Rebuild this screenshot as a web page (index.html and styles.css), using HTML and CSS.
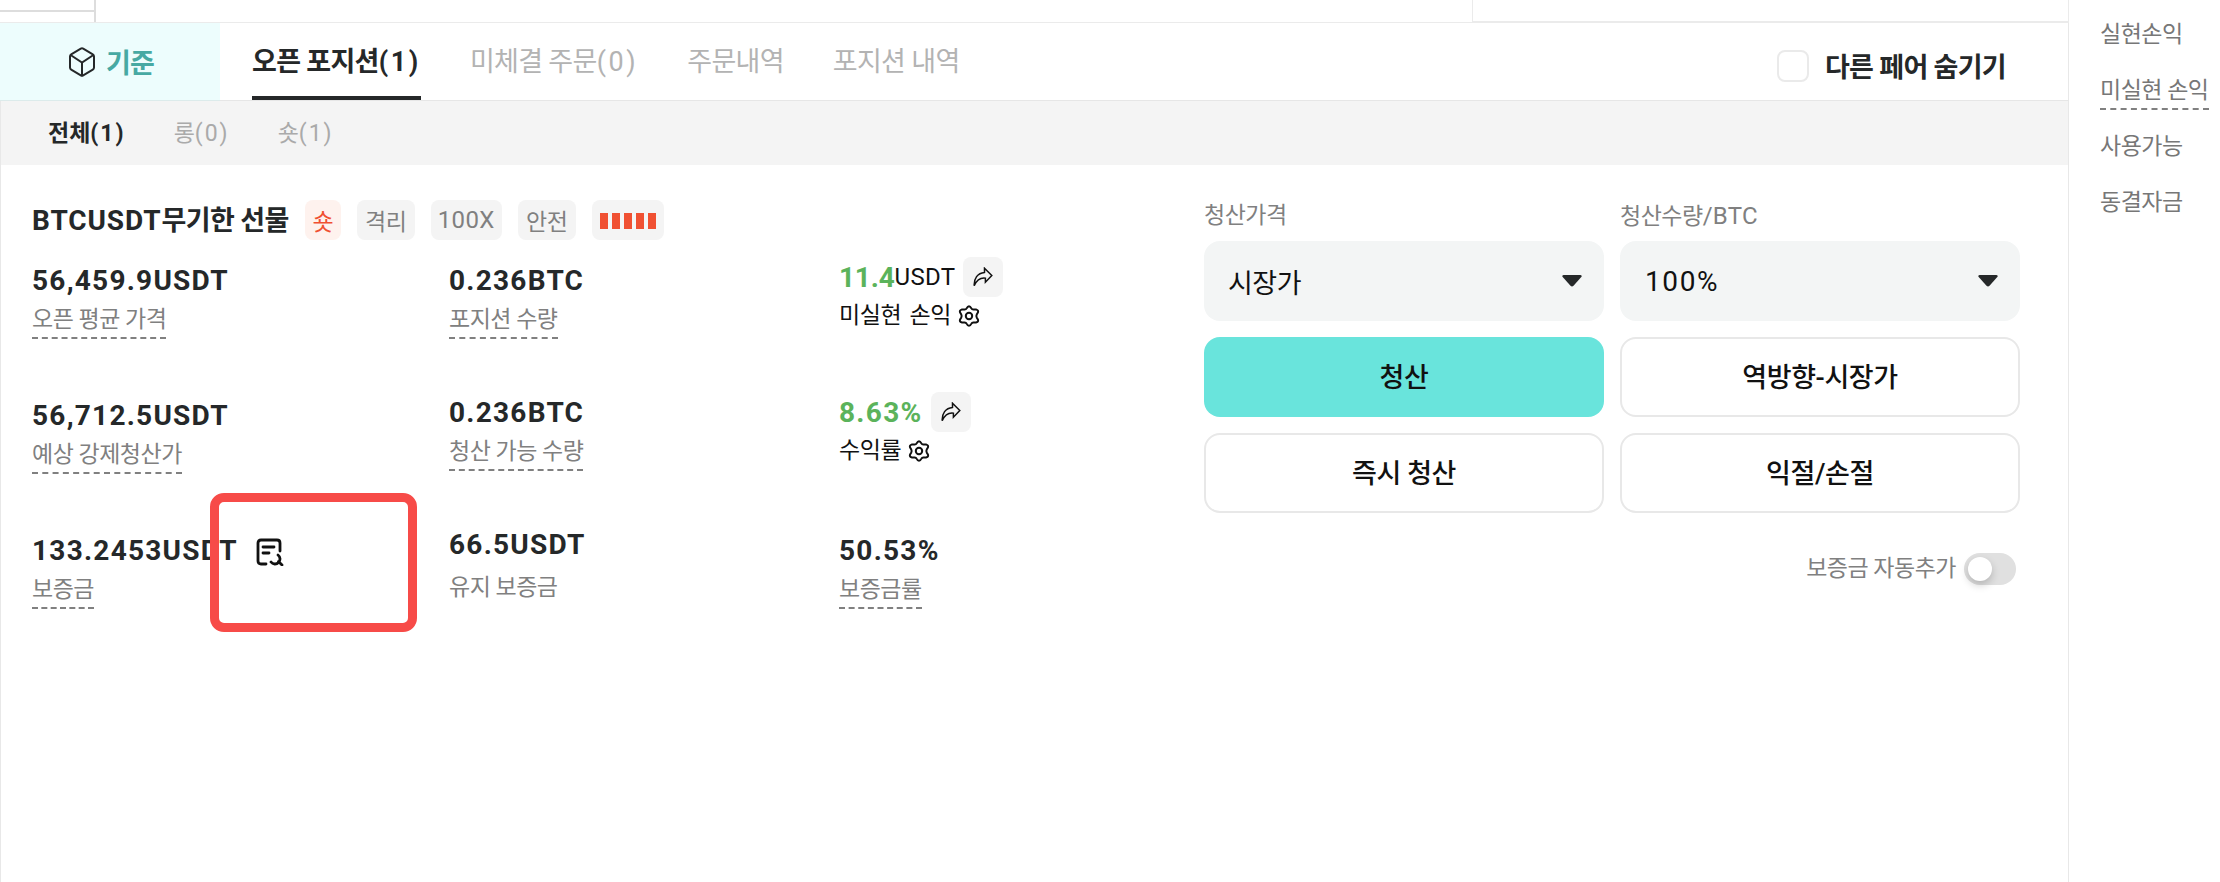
FILE: index.html
```
<!DOCTYPE html>
<html lang="ko">
<head>
    <meta charset="UTF-8">
    <meta name="viewport" content="width=device-width, initial-scale=1.0">
    <title>오픈 포지션</title>
    <link rel="stylesheet" href="styles.css">
</head>
<body>

    <svg class="symbols">
        <symbol id="share" viewBox="0 0 20 20">
            <path d="M11.5 1.2 L18.8 8.4 L12.4 15.2 V11.2 C7.5 10.6 4 12.5 1.2 18.8 C.8 11.5 4.5 6 11.5 5.4 Z"/>
        </symbol>
        <symbol id="gear" viewBox="0 0 22 22">
            <path d="M11 1.2 Q12.3 1.2 13.4 3.4 Q14 4.7 15.6 4.6 L18.4 4.6 Q20.8 5.4 19.9 7.6 L18.7 9.6 Q18 11 18.7 12.4 L19.9 14.4 Q20.8 16.6 18.4 17.4 L15.6 17.4 Q14 17.3 13.4 18.6 Q12.3 20.8 11 20.8 Q9.7 20.8 8.6 18.6 Q8 17.3 6.4 17.4 L3.6 17.4 Q1.2 16.6 2.1 14.4 L3.3 12.4 Q4 11 3.3 9.6 L2.1 7.6 Q1.2 5.4 3.6 4.6 L6.4 4.6 Q8 4.7 8.6 3.4 Q9.7 1.2 11 1.2 Z"/>
            <circle cx="11" cy="11" r="3.2"/>
        </symbol>
    </svg>

    <div class="page">
        <main class="main">
            <div class="top-strip">
                <div class="strip-left"></div>
                <div class="strip-right"></div>
            </div>

            <header class="tabs">
                <div class="base-tab">
                    <svg class="cube" viewBox="0 0 26 30">
                        <path d="M11.8 1.7 Q13 1 14.2 1.7 L23.8 7.3 Q25 8 25 9.4 V20.6 Q25 22 23.8 22.7 L14.2 28.3 Q13 29 11.8 28.3 L2.2 22.7 Q1 22 1 20.6 V9.4 Q1 8 2.2 7.3 Z M1.6 8 L13 15.5 L24.4 8 M13 15.5 V28.6"/>
                    </svg>
                    <span>기준</span>
                </div>
                <nav class="tab-list">
                    <a class="tab active">오픈 포지션<span class="num">(1)</span></a>
                    <a class="tab">미체결 주문<span class="num">(0)</span></a>
                    <a class="tab">주문내역</a>
                    <a class="tab">포지션 내역</a>
                </nav>
                <label class="hide-pairs"><span class="checkbox"></span>다른 페어 숨기기</label>
            </header>

            <section class="panel">
                <div class="sub-tabs">
                    <span class="sub-tab active">전체<span class="num">(1)</span></span>
                    <span class="sub-tab">롱<span class="num">(0)</span></span>
                    <span class="sub-tab">숏<span class="num">(1)</span></span>
                </div>

                <div class="position">
                    <div class="info">
                        <div class="title">
                            <h2><span class="pair">BTCUSDT</span>무기한 선물</h2>
                            <span class="badge short">숏</span>
                            <span class="badge">격리</span>
                            <span class="badge lever">100X</span>
                            <span class="badge">안전</span>
                            <span class="badge bars"><i></i><i></i><i></i><i></i><i></i></span>
                        </div>

                        <div class="stats">
                            <div class="col col-price">
                                <div class="stat">
                                    <div class="value">56,459.9USDT</div>
                                    <span class="label dashed">오픈 평균 가격</span>
                                </div>
                                <div class="stat">
                                    <div class="value">56,712.5USDT</div>
                                    <span class="label dashed">예상 강제청산가</span>
                                </div>
                                <div class="stat margin-stat">
                                    <div class="value">133.2453USDT
                                        <svg class="doc" viewBox="0 0 28 28">
                                            <path d="M10 26 H5 Q2 26 2 23 V5 Q2 2 5 2 H21 Q24 2 24 5 V13 M7 9 H18 M7 15 H13"/>
                                            <path d="M22 17 A5 5 0 1 1 15 24 M22.5 23.5 L26 27"/>
                                        </svg>
                                    </div>
                                    <span class="label dashed">보증금</span>
                                    <div class="highlight"></div>
                                </div>
                            </div>

                            <div class="col col-amount">
                                <div class="stat">
                                    <div class="value">0.236BTC</div>
                                    <span class="label dashed">포지션 수량</span>
                                </div>
                                <div class="stat">
                                    <div class="value">0.236BTC</div>
                                    <span class="label dashed">청산 가능 수량</span>
                                </div>
                                <div class="stat keep-stat">
                                    <div class="value">66.5USDT</div>
                                    <span class="label">유지 보증금</span>
                                </div>
                            </div>

                            <div class="col col-profit">
                                <div class="profit">
                                    <div class="profit-value"><b>11.4</b>USDT<span class="share"><svg><use href="#share"/></svg></span></div>
                                    <div class="profit-label">미실현 손익<svg class="gear"><use href="#gear"/></svg></div>
                                </div>
                                <div class="profit">
                                    <div class="profit-value rate"><b>8.63%</b><span class="share"><svg><use href="#share"/></svg></span></div>
                                    <div class="profit-label">수익률<svg class="gear"><use href="#gear"/></svg></div>
                                </div>
                                <div class="stat">
                                    <div class="value">50.53%</div>
                                    <span class="label dashed">보증금률</span>
                                </div>
                            </div>
                        </div>
                    </div>

                    <div class="close-form">
                        <div class="form-label">청산가격</div>
                        <div class="form-label">청산수량<span class="unit">/BTC</span></div>
                        <div class="select">시장가<svg class="caret" viewBox="0 0 20 12"><path d="M1.5 0 H18.5 Q20.5 .6 19.3 2 L11.5 10.8 Q10 12.4 8.5 10.8 L.7 2 Q-.5 .6 1.5 0 Z"/></svg></div>
                        <div class="select percent">100%<svg class="caret" viewBox="0 0 20 12"><path d="M1.5 0 H18.5 Q20.5 .6 19.3 2 L11.5 10.8 Q10 12.4 8.5 10.8 L.7 2 Q-.5 .6 1.5 0 Z"/></svg></div>
                        <button class="btn primary">청산</button>
                        <button class="btn">역방향-시장가</button>
                        <button class="btn">즉시 청산</button>
                        <button class="btn">익절/손절</button>
                        <div class="auto-add">보증금 자동추가<span class="switch"></span></div>
                    </div>
                </div>
            </section>
        </main>

        <aside class="assets">
            <div><span class="asset">실현손익</span></div>
            <div><span class="asset dashed">미실현 손익</span></div>
            <div><span class="asset">사용가능</span></div>
            <div><span class="asset">동결자금</span></div>
        </aside>
    </div>

</body>
</html>
```
FILE: styles.css
```
* {
    box-sizing: border-box;
}
body {
    margin: 0;
    width: 2220px;
    height: 882px;
    overflow: hidden;
    background-color: #fff;
    color: #252829;
    font-family: Roboto, "Noto Sans CJK KR", sans-serif;
    font-size: 28px;
    white-space: nowrap;
}
.symbols {
    display: none;
}
svg {
    fill: none;
    stroke: #111;
    flex: none;
}
.page {
    display: flex;
    height: 882px;
}
.main {
    width: 2069px;
    flex: none;
    display: flex;
    flex-direction: column;
}

/* bottom edge of the chart area */
.top-strip {
    display: flex;
    justify-content: space-between;
    height: 23px;
    border-bottom: 1px solid #ebebeb;
}
.strip-left {
    width: 96px;
    border-right: 2px solid #ddd;
    background: linear-gradient(#ddd, #ddd) 0 10px / 100% 2px no-repeat;
}
.strip-right {
    width: 597px;
    border: 1px solid #ebebeb;
    border-top: none;
}

/* main tabs */
.tabs {
    display: flex;
    height: 78px;
    border-bottom: 1px solid #e6e6e6;
    border-right: 1px solid #e8e8e8;
}
.base-tab {
    width: 220px;
    height: 78px;
    display: flex;
    align-items: center;
    padding-left: 68px;
    gap: 10px;
    background-color: #edfdfd;
    border-bottom: 1px solid #dcebeb;
    color: #47a9a3;
    font-weight: bold;
    font-size: 27px;
    letter-spacing: -0.9px;
}
.cube {
    width: 28px;
    height: 30px;
    stroke: #252829;
    stroke-width: 2;
}
.tab-list {
    display: flex;
    gap: 49px;
    margin-left: 32px;
}
.tab {
    height: 77px;
    line-height: 78px;
    font-size: 27px;
    letter-spacing: -0.7px;
    color: #b3b3b3;
}
.tab.active {
    color: #252829;
    font-weight: bold;
    border-bottom: 4px solid #252829;
}
.tab .num {
    letter-spacing: 2.6px;
}
.hide-pairs {
    display: flex;
    align-items: center;
    gap: 16px;
    margin: 8px 62px 0 auto;
    font-size: 27px;
    font-weight: bold;
    letter-spacing: -0.7px;
}
.checkbox {
    width: 32px;
    height: 32px;
    border: 2px solid #eaeaea;
    border-radius: 8px;
}

.panel {
    flex: 1;
    border-left: 1px solid #e8e8e8;
    border-right: 1px solid #e8e8e8;
}
.sub-tabs {
    display: flex;
    align-items: center;
    gap: 48px;
    height: 64px;
    padding: 0 0 5px 47px;
    background-color: #f4f4f4;
    font-size: 23px;
    color: #aaa;
}
.sub-tab .num {
    letter-spacing: 2px;
}
.sub-tab.active {
    color: #252829;
    font-weight: bold;
}

/* position card */
.position {
    display: flex;
    justify-content: space-between;
    padding: 35px 48px 0 31px;
}
.title {
    display: flex;
    align-items: center;
    gap: 16px;
    height: 40px;
}
.title h2 {
    margin: -3px 0 0;
    font-size: 27px;
    letter-spacing: -0.6px;
}
.pair {
    font-size: 28px;
    letter-spacing: 0.9px;
}
.badge {
    display: flex;
    align-items: center;
    justify-content: center;
    height: 40px;
    width: 58px;
    border-radius: 8px;
    background-color: #f4f4f4;
    color: #808080;
    font-size: 23px;
    letter-spacing: -0.5px;
}
.badge.short {
    width: 36px;
    background-color: #fef2ee;
    color: #f05032;
}
.badge.lever {
    width: 71px;
    font-size: 24px;
    letter-spacing: 0.4px;
}
.badge.bars {
    width: 72px;
    gap: 4px;
    padding-top: 2px;
}
.bars i {
    width: 8px;
    height: 16px;
    background-color: #f05032;
}

.stats {
    display: flex;
}
.col-price {
    width: 417px;
}
.col-amount {
    width: 390px;
}
.stat {
    height: 135px;
    padding-top: 20px;
}
.col-amount .stat {
    height: 132px;
}
.value {
    display: flex;
    align-items: center;
    height: 40px;
    font-weight: bold;
    font-size: 28px;
    letter-spacing: 1.25px;
}
.label {
    display: inline-block;
    height: 39px;
    line-height: 40px;
    font-size: 23px;
    letter-spacing: -0.5px;
    color: #808080;
}
.dashed {
    border-bottom: 2px dashed #808080;
}
.margin-stat {
    position: relative;
}
.doc {
    width: 28px;
    height: 28px;
    margin: 3px 0 0 18px;
    stroke-width: 2.8;
    stroke-linecap: round;
}
.highlight {
    position: absolute;
    left: 178px;
    top: -17px;
    width: 207px;
    height: 139px;
    border: 9px solid #f74b48;
    border-radius: 14px;
}
.keep-stat .label {
    margin-top: 4px;
}

.profit {
    height: 135px;
    padding-top: 17px;
    color: #111;
}
.profit-value {
    display: flex;
    align-items: center;
    height: 40px;
    font-size: 24px;
    letter-spacing: 0.3px;
}
.profit-value b {
    font-size: 28px;
    letter-spacing: -0.2px;
    color: #5bb35b;
}
.profit-value.rate b {
    letter-spacing: 1.3px;
}
.share {
    display: flex;
    align-items: center;
    justify-content: center;
    width: 40px;
    height: 40px;
    margin-left: 8px;
    border-radius: 8px;
    background-color: #f4f4f4;
}
.share svg {
    width: 20px;
    height: 20px;
    stroke-width: 1.5;
}
.profit-label {
    display: flex;
    align-items: center;
    height: 32px;
    font-size: 23px;
    letter-spacing: -0.4px;
    word-spacing: 3px;
}
.gear {
    width: 22px;
    height: 22px;
    margin: 6px 0 0 7px;
    stroke-width: 2;
    stroke-linejoin: round;
}

/* close position form */
.close-form {
    display: grid;
    grid-template-columns: 400px 400px;
    grid-template-rows: 25px 80px 80px 80px 32px;
    gap: 16px;
}
.form-label {
    line-height: 32px;
    font-size: 23px;
    letter-spacing: -0.5px;
    color: #808080;
}
.unit {
    font-size: 24px;
    letter-spacing: 0.3px;
}
.select {
    display: flex;
    align-items: center;
    justify-content: space-between;
    padding: 0 22px 0 24px;
    border-radius: 16px;
    background-color: #f3f5f5;
    color: #111;
    font-size: 27px;
    letter-spacing: -0.5px;
}
.select.percent {
    padding-left: 25px;
    font-size: 28px;
    letter-spacing: 1.6px;
}
.caret {
    width: 20px;
    height: 12px;
    fill: #252829;
    stroke: none;
}
.btn {
    padding: 0 0 3px;
    border: 2px solid #e8e8e8;
    border-radius: 16px;
    background-color: #fff;
    color: #111;
    font: 500 27px Roboto, "Noto Sans CJK KR", sans-serif;
    letter-spacing: -0.4px;
}
.btn.primary {
    border: none;
    background-color: #69e4dc;
}
.auto-add {
    grid-column: 2;
    display: flex;
    align-items: center;
    justify-content: flex-end;
    gap: 8px;
    height: 32px;
    margin: 24px 4px 0 0;
    line-height: 30px;
    font-size: 23px;
    letter-spacing: -0.5px;
    color: #808080;
}
.switch {
    width: 52px;
    height: 32px;
    padding: 4px;
    border-radius: 16px;
    background-color: #e0e0e0;
}
.switch::before {
    content: "";
    display: block;
    width: 24px;
    height: 24px;
    border-radius: 50%;
    background-color: #fff;
    box-shadow: 0 4px 8px rgba(0, 0, 0, 0.2);
}

/* account column */
.assets {
    padding: 15px 0 0 31px;
    font-size: 23px;
    letter-spacing: -0.5px;
    color: #777;
}
.assets div {
    height: 56px;
}
.asset {
    display: inline-block;
    height: 39px;
    line-height: 40px;
}
```
